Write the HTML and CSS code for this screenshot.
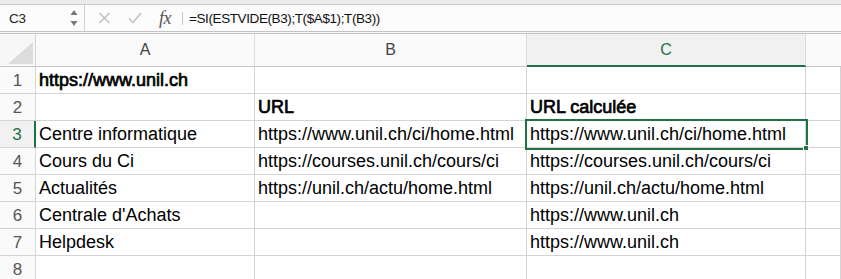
FILE: index.html
```html
<!DOCTYPE html>
<html lang="fr">
<head>
  <meta charset="UTF-8" />
  <title>Classeur</title>
  <link rel="stylesheet" href="styles.css">
</head>
<body>
  <div class="top-strip"></div>

  <!-- Barre de formule -->
  <div class="formula-bar">
    <div class="name-box">
      <span class="cell-ref">C3</span>
      <span class="spinner">
        <svg width="8" height="17" viewBox="0 0 8 17"><path d="M4 0 L7.5 5 L0.5 5 Z" fill="#777"/><path d="M0.5 11 L7.5 11 L4 16 Z" fill="#777"/></svg>
      </span>
    </div>
    <div class="fb-tools">
      <svg class="fb-icon" width="13" height="12" viewBox="0 0 13 12"><path d="M1.5 1 L11.5 11 M11.5 1 L1.5 11" stroke="#bdbdbd" stroke-width="1.4" fill="none"/></svg>
      <svg class="fb-icon check" width="14" height="12" viewBox="0 0 14 12"><path d="M1 6.5 L5 10.5 L13 1" stroke="#bdbdbd" stroke-width="1.4" fill="none"/></svg>
      <span class="fx">fx</span>
      <span class="fb-sep"></span>
    </div>
    <div class="formula">=SI(ESTVIDE(B3);T($A$1);T(B3))</div>
  </div>
  <div class="bar-gap"></div>

  <!-- Feuille -->
  <div class="sheet">
    <div class="corner"><span class="corner-tri"></span></div>
    <div class="col-head">A</div>
    <div class="col-head">B</div>
    <div class="col-head sel">C</div>
    <div class="col-head empty"></div>

    <div class="row-head">1</div>
    <div class="cell bold">https://www.unil.ch</div>
    <div class="cell"></div>
    <div class="cell"></div>
    <div class="cell"></div>

    <div class="row-head">2</div>
    <div class="cell"></div>
    <div class="cell bold">URL</div>
    <div class="cell bold">URL calculée</div>
    <div class="cell"></div>

    <div class="row-head sel">3</div>
    <div class="cell">Centre informatique</div>
    <div class="cell">https://www.unil.ch/ci/home.html</div>
    <div class="cell active">https://www.unil.ch/ci/home.html<span class="handle"></span></div>
    <div class="cell"></div>

    <div class="row-head">4</div>
    <div class="cell">Cours du Ci</div>
    <div class="cell">https://courses.unil.ch/cours/ci</div>
    <div class="cell">https://courses.unil.ch/cours/ci</div>
    <div class="cell"></div>

    <div class="row-head">5</div>
    <div class="cell">Actualités</div>
    <div class="cell">https://unil.ch/actu/home.html</div>
    <div class="cell">https://unil.ch/actu/home.html</div>
    <div class="cell"></div>

    <div class="row-head">6</div>
    <div class="cell">Centrale d'Achats</div>
    <div class="cell"></div>
    <div class="cell">https://www.unil.ch</div>
    <div class="cell"></div>

    <div class="row-head">7</div>
    <div class="cell">Helpdesk</div>
    <div class="cell"></div>
    <div class="cell">https://www.unil.ch</div>
    <div class="cell"></div>

    <div class="row-head">8</div>
    <div class="cell"></div>
    <div class="cell"></div>
    <div class="cell"></div>
    <div class="cell"></div>
  </div>
</body>
</html>
```

FILE: styles.css
```css
* {
  margin: 0;
  padding: 0;
  box-sizing: border-box;
}
html, body {
  height: 100%;
  overflow: hidden;
}
body {
  background: #fff;
  font-family: 'Liberation Sans', Arial, sans-serif;
  color: #000;
}
.top-strip {
  height: 5px;
  background: #ececec;
  border-bottom: 1px solid #c9c9c9;
}
.formula-bar {
  height: 27px;
  display: flex;
  align-items: center;
  background: #fcfcfc;
  border-bottom: 1px solid #c4c4c4;
}
.name-box {
  width: 85px;
  height: 100%;
  display: flex;
  align-items: center;
  justify-content: space-between;
  padding: 0 6px 0 9px;
  border-right: 1px solid #d2d2d2;
}
.cell-ref {
  font-size: 13.5px;
  color: #222;
  letter-spacing: -0.3px;
}
.spinner {
  display: flex;
  padding-top: 1px;
}
.fb-tools {
  display: flex;
  align-items: center;
  padding-left: 13px;
  height: 100%;
}
.fb-icon {
  margin-right: 17px;
}
.fx {
  font-family: 'Liberation Serif', 'Times New Roman', serif;
  font-style: italic;
  font-size: 18px;
  color: #555;
  width: 16px;
  margin-right: 7px;
  letter-spacing: -0.5px;
}
.fb-sep {
  width: 1px;
  height: 13px;
  background: #c8c8c8;
}
.formula {
  padding-left: 6px;
  font-size: 13.5px;
  letter-spacing: -0.4px;
  color: #111;
}
.bar-gap {
  height: 2px;
  background: #f6f6f6;
  border-bottom: 1px solid #c4c4c4;
}
.sheet {
  display: grid;
  grid-template-columns: 36px 219px 272px 279px 1fr;
  grid-template-rows: 33px repeat(8, 27px);
}
.corner {
  position: relative;
  background: #f7f7f7;
  border-right: 1px solid #d4d4d4;
  border-bottom: 1px solid #c6c6c6;
}
.corner-tri {
  position: absolute;
  right: 2px;
  bottom: 2px;
  width: 25px;
  height: 22px;
  background: #dcdcdc;
  clip-path: polygon(100% 0, 100% 100%, 0 100%);
}
.col-head {
  display: flex;
  align-items: center;
  justify-content: center;
  font-size: 16px;
  color: #444;
  background: #fafafa;
  border-right: 1px solid #dedede;
  border-bottom: 1px solid #c6c6c6;
}
.col-head.sel {
  background: #f1f1f1;
  color: #1e7145;
  border-bottom: 2px solid #1e7145;
}
.col-head.empty {
  border-right: none;
}
.row-head {
  display: flex;
  align-items: center;
  justify-content: center;
  padding-top: 1px;
  font-size: 17px;
  color: #555;
  background: #fafafa;
  border-right: 1px solid #d4d4d4;
  border-bottom: 1px solid #d4d4d4;
}
.row-head.sel {
  color: #1e7145;
  background: #f1f1f1;
  border-right: 2px solid #1e7145;
}
.cell {
  display: flex;
  align-items: center;
  padding: 1px 0 0 3px;
  font-size: 18px;
  white-space: nowrap;
  border-right: 1px solid #d4d4d4;
  border-bottom: 1px solid #d4d4d4;
}
/* gras synthétique : garde la largeur du regular comme dans Excel */
.cell.bold {
  -webkit-text-stroke: 0.7px #000;
}
.cell.active {
  position: relative;
  z-index: 1;
  outline: 2px solid #217346;
  outline-offset: 0;
}
.handle {
  position: absolute;
  right: -4px;
  bottom: -4px;
  width: 6px;
  height: 6px;
  background: #217346;
  border: 1px solid #fff;
}
```
